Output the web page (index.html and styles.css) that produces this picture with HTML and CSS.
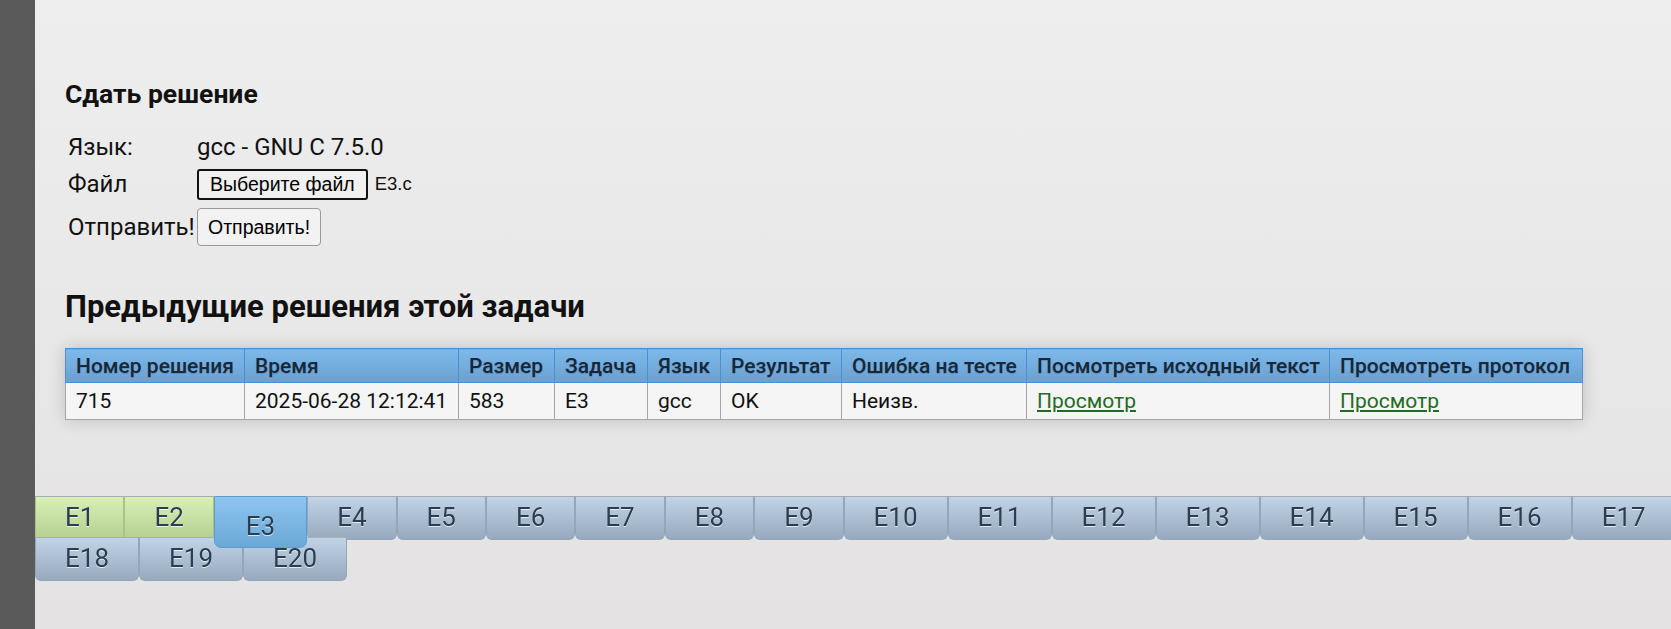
FILE: index.html
```html
<!DOCTYPE html>
<html lang="ru">
<head>
<meta charset="utf-8">
<title>Сдать решение</title>
<link rel="stylesheet" href="styles.css">
</head>
<body>
<div class="layout">
  <main class="content">
    <section class="submit">
      <h3 class="submit-title">Сдать решение</h3>
      <div class="form-grid">
        <div class="form-label">Язык:</div>
        <div class="form-value">gcc - GNU C 7.5.0</div>
        <div class="form-label">Файл</div>
        <div class="form-value"><span class="file-btn">Выберите файл</span><span class="file-name">E3.c</span></div>
        <div class="form-label">Отправить!</div>
        <div class="form-value"><span class="send-btn">Отправить!</span></div>
      </div>
    </section>

    <h2 class="prev-title">Предыдущие решения этой задачи</h2>
    <table class="runs">
      <colgroup>
        <col class="c1"><col class="c2"><col class="c3"><col class="c4"><col class="c5"><col class="c6"><col class="c7"><col class="c8"><col class="c9">
      </colgroup>
      <thead>
        <tr>
          <th>Номер решения</th>
          <th>Время</th>
          <th>Размер</th>
          <th>Задача</th>
          <th>Язык</th>
          <th>Результат</th>
          <th>Ошибка на тесте</th>
          <th>Посмотреть исходный текст</th>
          <th>Просмотреть протокол</th>
        </tr>
      </thead>
      <tbody>
        <tr>
          <td>715</td>
          <td>2025-06-28 12:12:41</td>
          <td>583</td>
          <td>E3</td>
          <td>gcc</td>
          <td>OK</td>
          <td>Неизв.</td>
          <td><a href="#">Просмотр</a></td>
          <td><a href="#">Просмотр</a></td>
        </tr>
      </tbody>
    </table>
  </main>
</div>
<nav class="tabs">
  <a class="tab tab-ok" href="#">E1</a>
  <a class="tab tab-ok" href="#">E2</a>
  <a class="tab tab-active" href="#">E3</a>
  <a class="tab" href="#">E4</a>
  <a class="tab" href="#">E5</a>
  <a class="tab" href="#">E6</a>
  <a class="tab" href="#">E7</a>
  <a class="tab" href="#">E8</a>
  <a class="tab" href="#">E9</a>
  <a class="tab" href="#">E10</a>
  <a class="tab" href="#">E11</a>
  <a class="tab" href="#">E12</a>
  <a class="tab" href="#">E13</a>
  <a class="tab" href="#">E14</a>
  <a class="tab" href="#">E15</a>
  <a class="tab" href="#">E16</a>
  <a class="tab" href="#">E17</a>
  <a class="tab" href="#">E18</a>
  <a class="tab" href="#">E19</a>
  <a class="tab" href="#">E20</a>
</nav>
</body>
</html>
```
FILE: styles.css
```css
html, body {
  margin: 0;
  padding: 0;
  height: 100%;
}
body {
  font-family: Roboto, "Noto Sans", sans-serif;
  color: #111;
  background: linear-gradient(#eeeeee, #e4e2e2);
  border-left: 35px solid #5a5a5a;
  box-sizing: border-box;
  overflow: hidden;
}
.layout {
  display: flex;
}
.content {
  padding: 80px 0 0 30px;
  flex: 1;
}
.submit-title {
  margin: 0;
  font-size: 26.5px;
  line-height: 28px;
  font-weight: 700;
}
.form-grid {
  margin-top: 22px;
  display: grid;
  grid-template-columns: 132px auto;
  grid-template-rows: 34px 40px 46px;
  align-items: center;
  font-size: 24px;
}
.form-label {
  padding-left: 3px;
  white-space: nowrap;
  line-height: 28px;
}
.form-value {
  display: flex;
  align-items: center;
  line-height: 28px;
}
.file-btn {
  font-family: "Liberation Sans", Arial, sans-serif;
  font-size: 19.5px;
  line-height: 21px;
  padding: 3px 11px;
  border: 2px solid #111;
  border-radius: 3px;
  background: #f0f0f0;
  color: #000;
}
.file-name {
  font-family: "Liberation Sans", Arial, sans-serif;
  font-size: 18.5px;
  margin-left: 7px;
}
.send-btn {
  font-family: "Liberation Sans", Arial, sans-serif;
  font-size: 19.5px;
  line-height: 22px;
  padding: 7px 10px;
  border: 1px solid #999999;
  border-radius: 4px;
  background: #f2f2f2;
  color: #000;
}
.prev-title {
  margin: 38px 0 0;
  font-size: 31px;
  line-height: 38px;
  font-weight: 700;
}
.runs {
  margin-top: 22px;
  border-collapse: collapse;
  table-layout: fixed;
  width: 1517px;
  font-size: 21px;
  box-shadow: 0 0 16px rgba(0, 0, 0, 0.18);
}
.c1 { width: 179px; }
.c2 { width: 214px; }
.c3 { width: 96px; }
.c4 { width: 93px; }
.c5 { width: 73px; }
.c6 { width: 121px; }
.c7 { width: 185px; }
.c8 { width: 303px; }
.c9 { width: 253px; }
.runs th {
  height: 33px;
  padding: 0 0 0 10px;
  text-align: left;
  font-weight: 500;
  color: #182838;
  white-space: nowrap;
  background: linear-gradient(#7db9e9, #6aa0d3);
  border: 1px solid #4e8dd0;
  text-shadow: 0 1px 1px rgba(0, 0, 0, 0.15);
}
.runs td {
  height: 36px;
  padding: 0 0 0 10px;
  background: #f5f5f5;
  border: 1px solid #a6a6a6;
  white-space: nowrap;
}
.runs a {
  color: #236b23;
  text-decoration: underline;
}
.tabs {
  position: fixed;
  left: 35px;
  top: 496px;
  width: 1660px;
  display: flex;
  flex-wrap: wrap;
}
.tab {
  box-sizing: border-box;
  height: 44px;
  margin-bottom: -3px;
  padding: 0 29px 3px;
  display: flex;
  align-items: center;
  justify-content: center;
  font-size: 26px;
  color: #2a3d52;
  text-decoration: none;
  text-shadow: 0 1px 0 rgba(255, 255, 255, 0.7);
  background: linear-gradient(#c1d4e6, #97a9be);
  border: 1px solid #93a6bb;
  border-top-color: #a9aeb4;
  border-radius: 0 0 6px 6px;
}
.tab-ok {
  background: linear-gradient(#d8f0b6, #b4cf90);
  border-color: #a8c386;
  border-top-color: #a9aeb4;
  border-radius: 0;
}
.tab-active {
  position: relative;
  z-index: 2;
  height: 52px;
  margin-bottom: -11px;
  padding: 8px 31px 0;
  background: linear-gradient(#8fc4ef, #6aa8d7);
  border-color: #5d9dd2;
  border-radius: 0 0 7px 7px;
}
```
